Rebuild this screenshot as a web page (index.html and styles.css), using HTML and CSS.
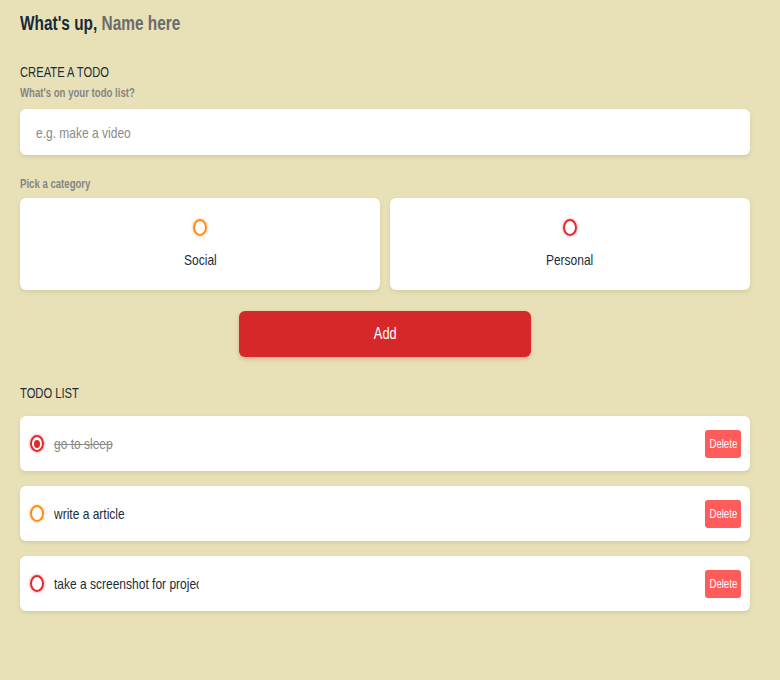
FILE: index.html
```html
<!DOCTYPE html>
<html>
<head>
<meta charset="utf-8">
<link rel="stylesheet" href="styles.css">
</head>
<body>
<main class="app">
  <h1 class="greeting">What's up, <span class="name">Name here</span></h1>

  <section class="create">
    <h2 class="section-title">CREATE A TODO</h2>
    <h4 class="label">What's on your todo list?</h4>
    <label class="input-box">
      <input class="todo-input" type="text" placeholder="e.g. make a video">
    </label>

    <h4 class="label label-cat">Pick a category</h4>
    <div class="options">
      <label class="option">
        <span class="bubble social"></span>
        <span class="option-text">Social</span>
      </label>
      <label class="option">
        <span class="bubble personal"></span>
        <span class="option-text">Personal</span>
      </label>
    </div>
    <div class="add-row">
      <button class="add-btn"><span class="btn-text">Add</span></button>
    </div>
  </section>

  <section class="list">
    <h2 class="section-title">TODO LIST</h2>
    <div class="items">
      <div class="item done">
        <span class="bubble personal checked"></span>
        <input class="item-text" type="text" value="go to sleep" readonly>
        <button class="delete"><span class="btn-text">Delete</span></button>
      </div>
      <div class="item">
        <span class="bubble social"></span>
        <input class="item-text" type="text" value="write a article" readonly>
        <button class="delete"><span class="btn-text">Delete</span></button>
      </div>
      <div class="item">
        <span class="bubble personal"></span>
        <input class="item-text" type="text" value="take a screenshot for project" readonly>
        <button class="delete"><span class="btn-text">Delete</span></button>
      </div>
    </div>
  </section>
</main>
</body>
</html>
```

FILE: styles.css
```css
* { box-sizing: border-box; }

html, body {
  margin: 0;
  padding: 0;
  background: #e8e1b8;
}

body {
  font-family: "Liberation Sans", Arial, sans-serif;
  color: #1c2b3a;
}

.app {
  padding: 11px 30px 40px 20px;
}

/* the UI uses a condensed face: Liberation Sans narrowed horizontally */
.greeting,
.section-title,
.label,
.todo-input,
.option-text,
.btn-text,
.item-text {
  transform: scaleX(0.8);
  transform-origin: 0 50%;
}

.greeting {
  margin: 0;
  font-size: 20px;
  line-height: 24px;
  font-weight: 700;
  color: #182838;
  transform: scaleX(0.77);
}

.name {
  color: #6b6b6b;
}

.section-title {
  margin: 0;
  font-size: 14px;
  line-height: 16px;
  font-weight: 400;
  color: #1c2b3a;
}

.create { margin-top: 29px; }

.label {
  margin: 6px 0 0;
  font-size: 12px;
  line-height: 14px;
  font-weight: 700;
  color: #858585;
}

.label-cat { margin-top: 22px; }

.input-box {
  display: flex;
  align-items: center;
  height: 46px;
  margin-top: 9px;
  padding-left: 16px;
  border-radius: 6px;
  background: #fff;
  box-shadow: 0 2px 4px rgba(120, 110, 60, 0.18);
  cursor: text;
}

.todo-input {
  width: 400px;
  height: 46px;
  border: none;
  background: transparent;
  padding: 0;
  font-family: inherit;
  font-size: 15px;
  color: #1c2b3a;
  outline: none;
}

.todo-input::placeholder { color: #8a8a8a; }

.options {
  display: grid;
  grid-template-columns: 1fr 1fr;
  gap: 10px;
  margin-top: 7px;
}

.option {
  height: 92px;
  background: #fff;
  border-radius: 6px;
  box-shadow: 0 2px 4px rgba(120, 110, 60, 0.18);
  display: flex;
  flex-direction: column;
  align-items: center;
  padding-top: 21px;
}

.option-text {
  display: inline-block;
  margin-top: 15px;
  font-size: 15px;
  line-height: 17px;
  color: #1c2b3a;
  transform-origin: 50% 50%;
}

.bubble {
  display: inline-block;
  width: 14px;
  height: 17px;
  border-radius: 50%;
  border: 2px solid;
  flex: none;
}

.bubble.social {
  border-color: #ff8c1a;
  box-shadow: 0 0 3px rgba(255, 140, 26, 0.6);
}

.bubble.personal {
  border-color: #e0282e;
  box-shadow: 0 0 3px rgba(224, 40, 46, 0.6);
}

.bubble.checked {
  position: relative;
}

.bubble.checked::after {
  content: "";
  position: absolute;
  left: 2px;
  top: 2.5px;
  width: 6px;
  height: 8px;
  border-radius: 50%;
  background: #e0282e;
}

.add-row {
  display: flex;
  justify-content: center;
  margin-top: 21px;
}

.add-btn {
  width: 292px;
  height: 46px;
  border: none;
  border-radius: 6px;
  background: #d62828;
  color: #fff;
  font-family: inherit;
  font-size: 16px;
  box-shadow: 0 2px 4px rgba(150, 40, 30, 0.25);
}

.btn-text {
  display: inline-block;
  transform-origin: 50% 50%;
}

.list { margin-top: 28px; }

.items {
  display: flex;
  flex-direction: column;
  gap: 15px;
  margin-top: 15px;
}

.item {
  height: 55px;
  background: #fff;
  border-radius: 6px;
  box-shadow: 0 2px 4px rgba(120, 110, 60, 0.18);
  display: flex;
  align-items: center;
  padding: 0 9px 0 10px;
}

.item-text {
  margin-left: 10px;
  width: 174px;
  margin-right: 0;
  border: none;
  background: transparent;
  padding: 0;
  font-family: inherit;
  font-size: 15px;
  color: #1c2b3a;
  outline: none;
}

.item-text { width: 181px; }

.item.done .item-text {
  text-decoration: line-through;
  color: #888;
}

.delete {
  margin-left: auto;
  width: 36px;
  height: 28px;
  border: none;
  border-radius: 3px;
  background: #ff5b5b;
  color: #fff;
  font-family: inherit;
  font-size: 12px;
  padding: 0;
  overflow: visible;
}
```
